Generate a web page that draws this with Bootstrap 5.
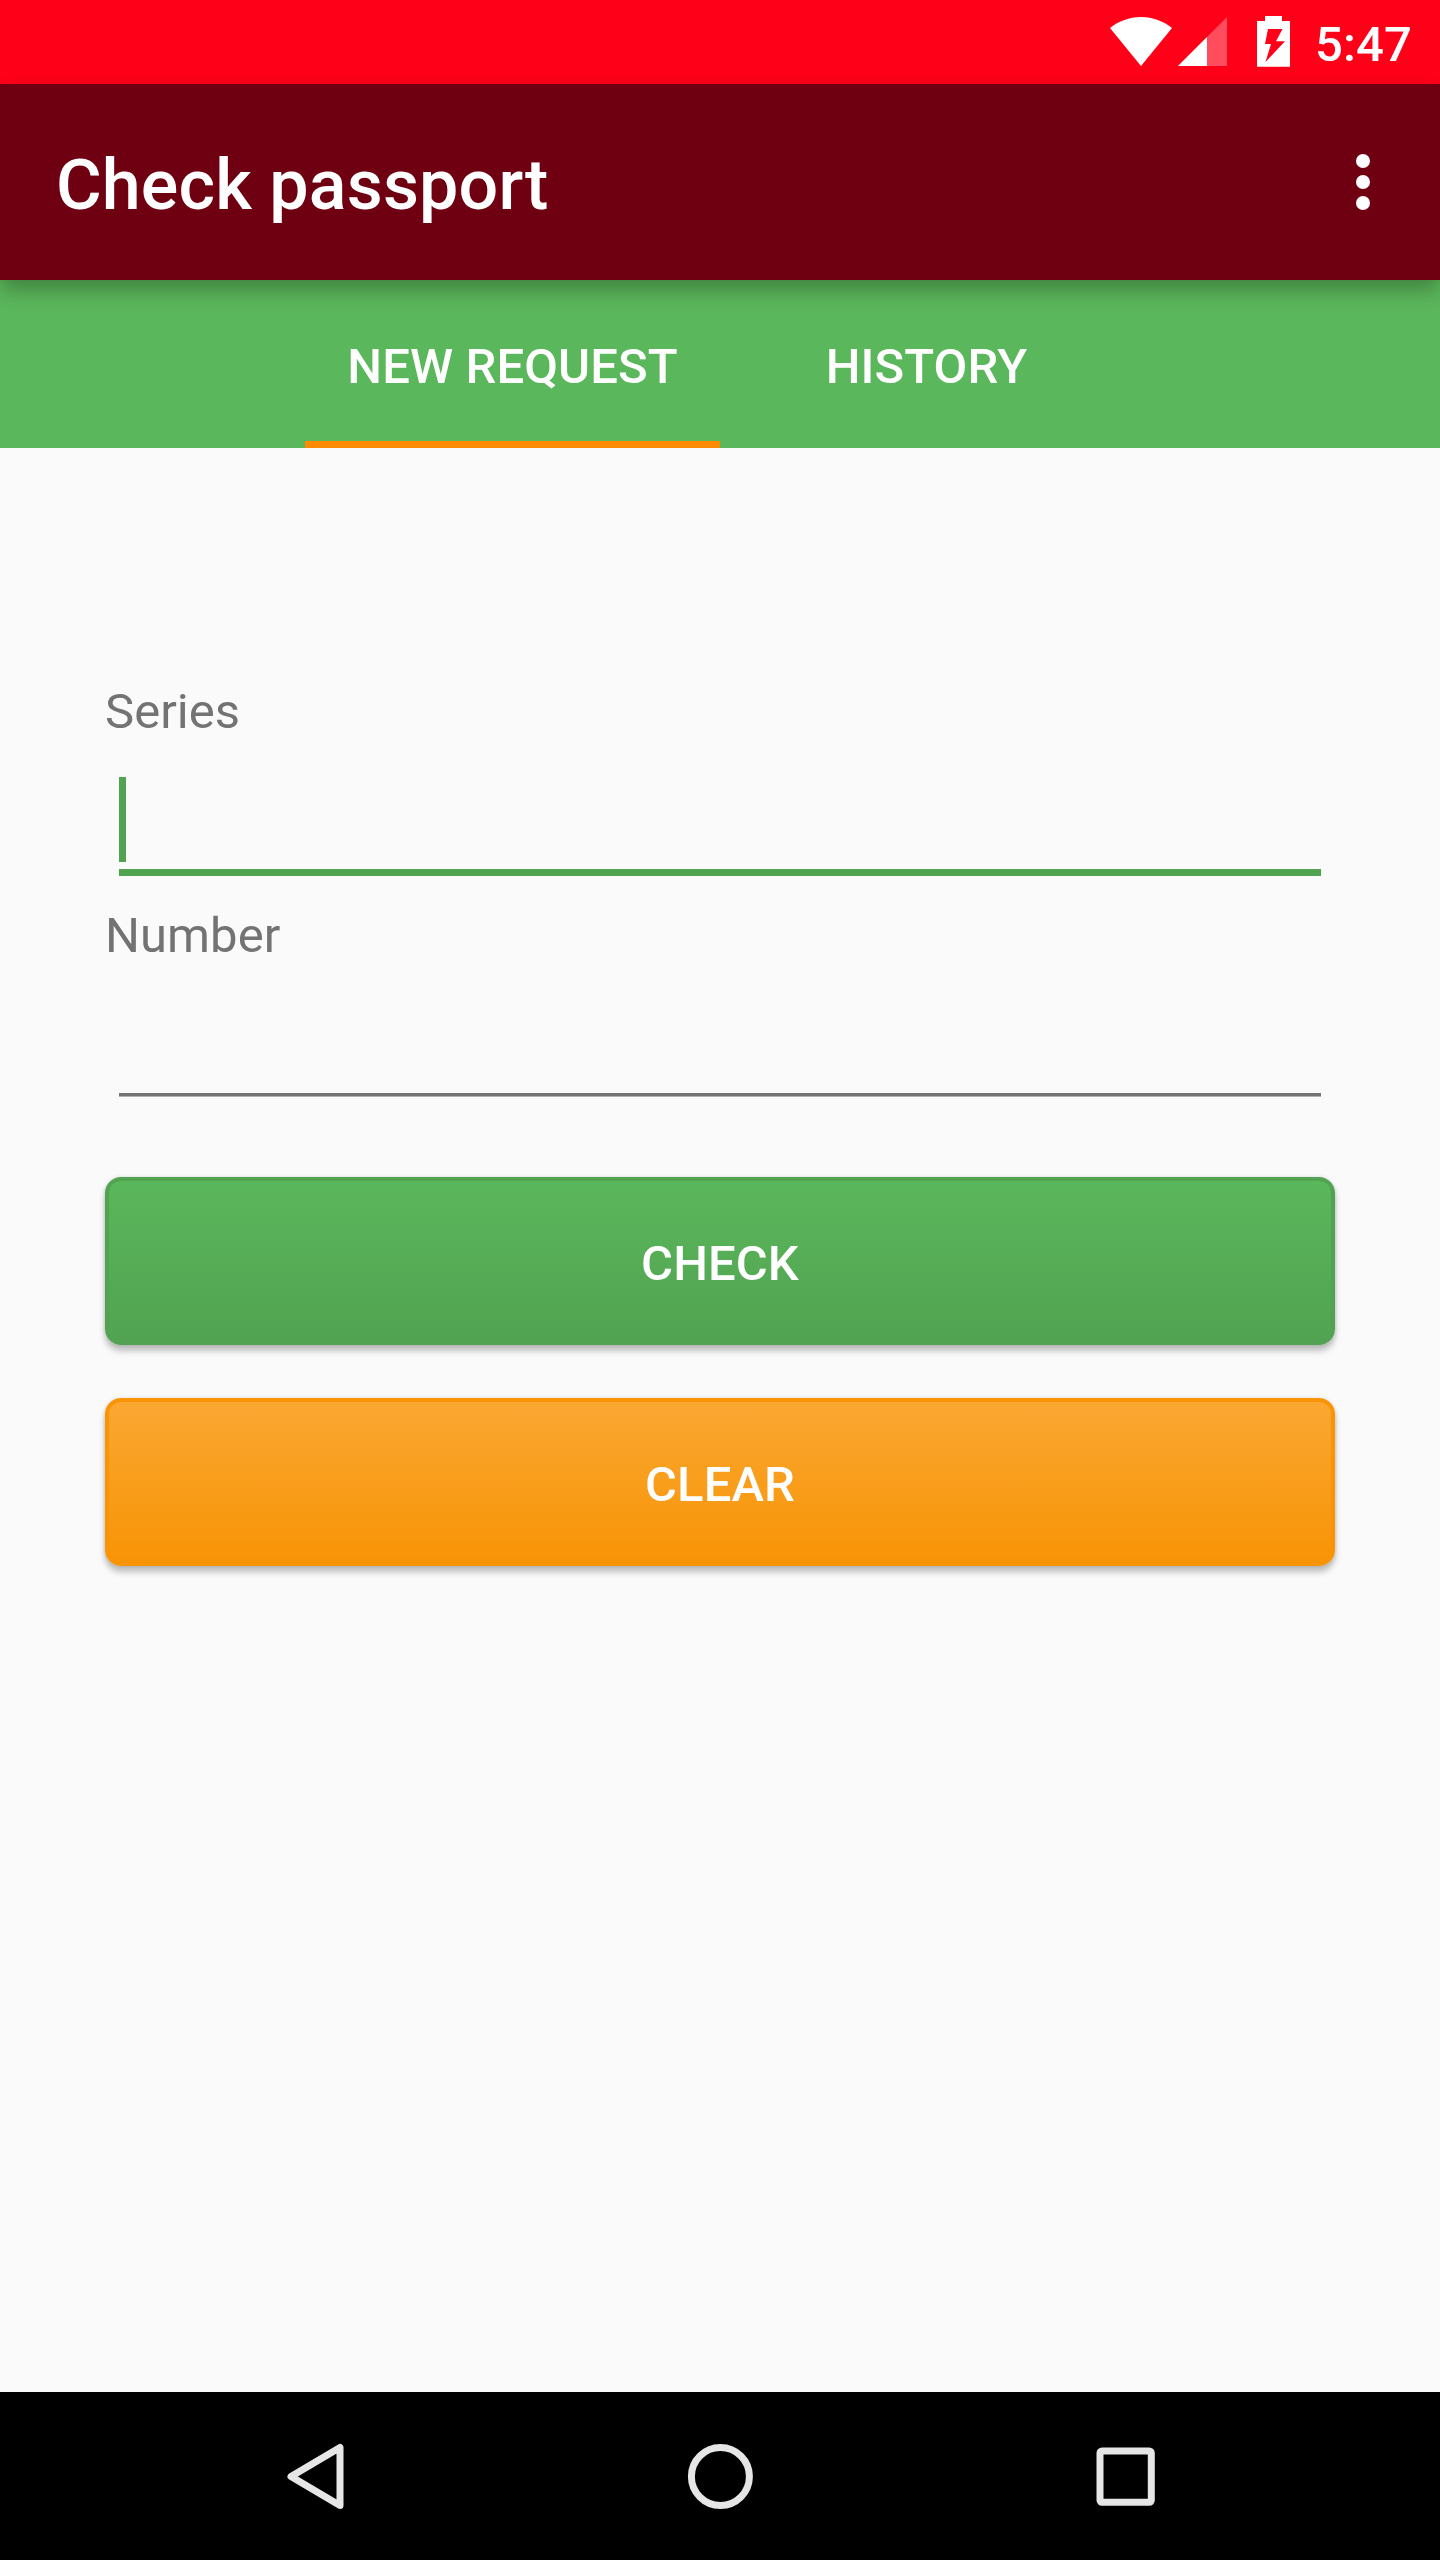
<!DOCTYPE html>
<html lang="en">
<head>
<meta charset="utf-8">
<meta name="viewport" content="width=device-width, initial-scale=1">
<title>Check passport</title>
<link href="https://cdn.jsdelivr.net/npm/bootstrap@5.3.0/dist/css/bootstrap.min.css" rel="stylesheet">
<style>
  body { font-family: Roboto, sans-serif; font-size: 49px; line-height: 58px; background: #fafafa; color: #737373; }
  .screen { height: 2560px; overflow: hidden; }
  .status-bar { height: 84px; background: #ff0019; color: #fff; }
  .clock { font-weight: 500; font-size: 49px; width: 125px; margin-left: 24px; padding-top: 5px; letter-spacing: .1px; }
  .app-bar { height: 196px; padding: 5px 0 0 56px; background: #6f0012; box-shadow: 0 10px 20px -1px rgba(0,0,0,.3); z-index: 2; }
  .app-title { font-size: 70px; font-weight: 500; line-height: 82px; letter-spacing: .14px; color: #fff; }
  .menu-btn { padding: 0; border: 0; width: 140px; }
  .tab-strip { height: 168px; padding-left: 305px; background: #5bb75b; }
  .tab-strip .nav-link { height: 168px; width: 413px; padding: 12px 0 0; border-radius: 0; color: #fff; font-weight: 500; letter-spacing: .1px; border-bottom: 7px solid transparent; }
  .tab-strip .nav-link.active { width: 415px; border-bottom-color: #ff8a00; }
  .form-area { padding: 234px 105px 0; }
  .field-label { height: 58px; padding-top: 1px; letter-spacing: .05px; }
  .entry { height: 166px; padding: 37px 14px 0; }
  .entry-focus { border-bottom: 7px solid #51a351; height: 99px; }
  .entry-idle { border-bottom: 3px solid #737373; height: 95px; box-shadow: 0 1px 0 #b0b0b0; }
  .caret { width: 7px; height: 85px; background: #51a351; }
  .actions { padding-top: 47px; gap: 53px; }
  .action { height: 168px; border: 4px solid; border-radius: 16px; font-size: 49px; font-weight: 500; letter-spacing: .1px; color: #fff; padding: 6px 0 0; box-shadow: 0 6px 6px rgba(0,0,0,.24), 0 0 4px rgba(0,0,0,.12); }
  .action-check { background: linear-gradient(#5bb75b, #51a351); border-color: #51a351; }
  .action-clear { background: linear-gradient(#faa732, #f89406); border-color: #f89406; }
  .sys-nav { height: 168px; background: #000; }
</style>
</head>
<body>
<div class="screen d-flex flex-column">
  <div class="status-bar d-flex align-items-center justify-content-end flex-shrink-0">
    <svg class="d-block" width="182" height="84" viewBox="1109 0 182 84" fill="#fff">
      <path d="M1141 66 1110 28C1119 21 1129 17 1141 17S1163 21 1172 28Z"/>
      <path d="M1227 17V66H1178Z" opacity=".3"/>
      <path d="M1207 37V66H1178Z"/>
      <path fill-rule="evenodd" d="M1265 16H1282V21H1290V66.7H1257V21H1265ZM1268 29 1265 44H1271L1265.5 62 1285 41.3H1276L1282.5 29Z"/>
    </svg>
    <div class="clock">5:47</div>
  </div>

  <header class="app-bar d-flex align-items-center justify-content-between position-relative flex-shrink-0">
    <h1 class="app-title m-0">Check passport</h1>
    <button class="btn menu-btn" type="button" aria-label="More options">
      <svg class="d-block" width="140" height="69" viewBox="1300 150 140 69" fill="#fff">
        <circle cx="1363" cy="161" r="7"/>
        <circle cx="1363" cy="182" r="7"/>
        <circle cx="1363" cy="203" r="7"/>
      </svg>
    </button>
  </header>

  <ul class="nav tab-strip flex-nowrap flex-shrink-0">
    <li class="nav-item"><a class="nav-link active d-flex align-items-center justify-content-center" href="#">NEW REQUEST</a></li>
    <li class="nav-item"><a class="nav-link d-flex align-items-center justify-content-center" href="#">HISTORY</a></li>
  </ul>

  <main class="form-area flex-grow-1">
    <div class="field-label text-nowrap">Series</div>
    <div class="entry"><div class="entry-focus"><div class="caret"></div></div></div>
    <div class="field-label text-nowrap">Number</div>
    <div class="entry"><div class="entry-idle"></div></div>
    <div class="d-grid actions">
      <button class="btn action action-check d-flex align-items-center justify-content-center" type="button">CHECK</button>
      <button class="btn action action-clear d-flex align-items-center justify-content-center" type="button">CLEAR</button>
    </div>
  </main>

  <nav class="sys-nav flex-shrink-0">
    <svg class="d-block" width="1440" height="168" viewBox="0 2392 1440 168" fill="none" stroke="#e6e6e6" stroke-width="7" stroke-linejoin="round">
      <path d="M291 2476.5 340 2447.5V2505.5Z"/>
      <circle cx="720.4" cy="2476.5" r="29"/>
      <rect x="1100" y="2451" width="51.3" height="51.3" rx="2"/>
    </svg>
  </nav>
</div>
<script src="https://cdn.jsdelivr.net/npm/bootstrap@5.3.0/dist/js/bootstrap.bundle.min.js"></script>
</body>
</html>
